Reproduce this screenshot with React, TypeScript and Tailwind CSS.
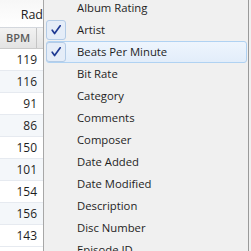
const rows = ['119', '116', '91', '86', '150', '101', '154', '156', '143'];

const items: { label: string; checked?: boolean; active?: boolean }[] = [
  { label: 'Album Rating' },
  { label: 'Artist', checked: true },
  { label: 'Beats Per Minute', checked: true, active: true },
  { label: 'Bit Rate' },
  { label: 'Category' },
  { label: 'Comments' },
  { label: 'Composer' },
  { label: 'Date Added' },
  { label: 'Date Modified' },
  { label: 'Description' },
  { label: 'Disc Number' },
  { label: 'Episode ID' },
];

const Check = () => (
  <svg width="12" height="12" viewBox="0 0 12 12">
    <path d="M2.2 6.2 L4.6 9.6 L10.2 1.8" fill="none" stroke="#1f3a93" strokeWidth="1.7" strokeLinecap="round" strokeLinejoin="round" />
  </svg>
);

export default function App() {
  return (
    <div className="w-[251px] h-[251px] overflow-hidden flex bg-white text-[#1e1e1e]" style={{ fontFamily: '"Open Sans", "Noto Sans", sans-serif' }}>
      {/* table column */}
      <div className="w-[43px] shrink-0 flex flex-col text-[12px] leading-[16px]">
        <div className="h-[28px] shrink-0 flex items-center justify-end pt-[2px] bg-gradient-to-b from-[#f7f7f7] to-white border-b border-[#d3d7dd] text-[12.5px] font-medium text-[#222]">
          Rad
        </div>
        <div className="h-[21px] shrink-0 flex bg-gradient-to-b from-[#f2f2f2] to-[#e3e3e3] border-b border-[#cacaca]">
          <div className="w-[37px] border-r border-[#c4c4c4] flex items-center justify-center text-[11px] font-semibold text-[#5a5a5a]">BPM</div>
        </div>
        {rows.map((r, i) => (
          <div key={r} className={`h-[22px] shrink-0 flex items-center justify-end pr-[6px] border-b border-[#e6eaf0] ${i % 2 === 0 ? 'bg-white' : 'bg-[#f4f7fa]'}`}>
            {r}
          </div>
        ))}
      </div>
      {/* menu */}
      <div className="flex-1 flex border-l border-[#a7a7a7] bg-[#f0f0f0]">
        <div className="flex-1 flex flex-col -mt-[3px] pl-[2px] pr-[1px] text-[11.3px] leading-[16px]">
          {items.map((it) => (
            <div
              key={it.label}
              className={`h-[22px] shrink-0 flex items-center rounded-[3px] border ${it.active ? 'border-[#b0d2f2] bg-gradient-to-b from-[#eef5fd] to-[#e2edfa]' : 'border-transparent'}`}
            >
              <div className="w-[20px] h-[20px] -ml-[1px] flex items-center justify-center">
                {it.checked && (
                  <div className="w-[20px] h-[20px] rounded-[3px] border border-[#b3cbe6] bg-[#e5edf8] flex items-center justify-center">
                    <Check />
                  </div>
                )}
              </div>
              <span className="ml-[11px] whitespace-nowrap">{it.label}</span>
            </div>
          ))}
        </div>
        <div className="w-[3px] shrink-0 bg-[#f0f0f0] border-l border-[#9a9a9a]" />
      </div>
    </div>
  );
}
